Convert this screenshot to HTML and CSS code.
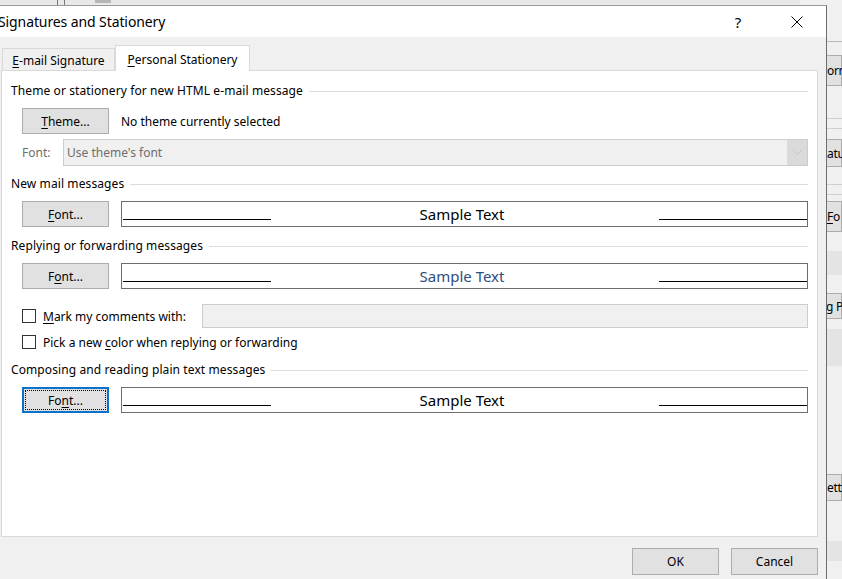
FILE: index.html
```html
<!DOCTYPE html>
<html>
<head>
<meta charset="utf-8">
<title>Signatures and Stationery</title>
<link rel="stylesheet" href="styles.css">
</head>
<body>
<div class="topstrip">
  <span class="tick t1"></span><span class="tick t2"></span><span class="tick-icon"></span>
</div>
<div class="backwin">
  <div class="bw-line l1"></div>
  <div class="bw-btn b1"><span class="bw-txt">orm</span></div>
  <div class="bw-line l2"></div>
  <div class="bw-line l3"></div>
  <div class="bw-btn b2"><span class="bw-txt">atu</span></div>
  <div class="bw-line l4"></div>
  <div class="bw-line l5"></div>
  <div class="bw-btn b3"><span class="bw-txt"><u>F</u>o</span></div>
  <div class="bw-band a1"></div>
  <div class="bw-btn b4"><span class="bw-txt g">g P</span></div>
  <div class="bw-band a2"></div>
  <div class="bw-btn b5"><span class="bw-txt">etti</span></div>
  <div class="bw-band a3"></div>
</div>
<div class="dialog">
  <div class="titlebar">
    <div class="title">Signatures and Stationery</div>
    <div class="tb-help">?</div>
    <div class="tb-close">
      <svg width="12" height="12" viewBox="0 0 12 12"><path d="M0.5 0.5 L11.5 11.5 M11.5 0.5 L0.5 11.5" stroke="#000" stroke-width="1" fill="none"/></svg>
    </div>
  </div>
  <div class="dbody">
    <div class="tabs">
      <div class="tab"><span><u>E</u>-mail Signature</span></div>
      <div class="tab active"><span><u>P</u>ersonal Stationery</span></div>
    </div>
    <div class="panel">
      <div class="group-head h1"><span>Theme or stationery for new HTML e-mail message</span></div>
      <div class="row r-theme">
        <div class="btn"><span><u>T</u>heme...</span></div>
        <span class="theme-text">No theme currently selected</span>
      </div>
      <div class="row r-combo">
        <span class="lbl-dis">Font:</span>
        <div class="combo">
          <span class="combo-text">Use theme's font</span>
          <span class="combo-arrow">
            <svg width="9" height="6" viewBox="0 0 9 6"><path d="M0.5 0.5 L4.5 4.5 L8.5 0.5" stroke="#c4c4c4" stroke-width="1" fill="none"/></svg>
          </span>
        </div>
      </div>
      <div class="group-head h2"><span>New mail messages</span></div>
      <div class="row r-font">
        <div class="btn"><span><u>F</u>ont...</span></div>
        <div class="sample"><span class="seg"></span><span class="sample-text">Sample Text</span><span class="seg"></span></div>
      </div>
      <div class="group-head h3"><span>Replying or forwarding messages</span></div>
      <div class="row r-font">
        <div class="btn"><span>F<u>o</u>nt...</span></div>
        <div class="sample"><span class="seg"></span><span class="sample-text blue">Sample Text</span><span class="seg"></span></div>
      </div>
      <div class="row r-mark">
        <span class="check"></span>
        <span class="mark-label"><u>M</u>ark my comments with:</span>
        <div class="textbox"></div>
      </div>
      <div class="row r-pick">
        <span class="check"></span>
        <span class="pick-label">Pick a new <u>c</u>olor when replying or forwarding</span>
      </div>
      <div class="group-head h4"><span>Composing and reading plain text messages</span></div>
      <div class="row r-font">
        <div class="btn focused"><span class="focus-rect">Fo<u>n</u>t...</span></div>
        <div class="sample"><span class="seg"></span><span class="sample-text">Sample Text</span><span class="seg"></span></div>
      </div>
    </div>
    <div class="footer">
      <div class="btn fbtn"><span>OK</span></div>
      <div class="btn fbtn"><span>Cancel</span></div>
    </div>
  </div>
</div>
</body>
</html>
```

FILE: styles.css
```css
html, body {
  margin: 0;
  padding: 0;
}
body {
  width: 842px;
  height: 579px;
  overflow: hidden;
  position: relative;
  background: #f0f0f0;
  font-family: "Noto Sans", "Open Sans", sans-serif;
  font-size: 12px;
  color: #000;
}
u { text-decoration: underline; text-underline-offset: 2px; text-decoration-thickness: 1px; }

.topstrip {
  height: 5px;
  background: #e8e8e8;
  display: flex;
}
.tick { display: block; width: 1px; height: 5px; background: #7a7a7a; }
.t1 { margin-left: 57px; }
.t2 { margin-left: 6px; }
.tick-icon { display: block; margin-left: 30px; width: 16px; height: 3px; background: #b5b5b5; }

.backwin {
  position: absolute;
  left: 800px;
  top: 0;
  width: 42px;
  height: 579px;
  background: #f0f0f0;
  display: flex;
  flex-direction: column;
  z-index: 1;
}
.bw-line { height: 1px; background: #d0d0d0; flex: none; }
.l1 { margin-top: 41px; background: #b9b9b9; }
.l2 { margin-top: 32px; }
.l3 { margin-top: 9px; }
.l4 { margin-top: 17px; }
.l5 { margin-top: 9px; }
.bw-btn {
  flex: none;
  box-sizing: border-box;
  border: 1px solid #adadad;
  background: #e1e1e1;
  display: flex;
  align-items: center;
  white-space: nowrap;
}
.bw-txt { padding-left: 26px; letter-spacing: -0.3px; }
.bw-txt.g { padding-left: 25px; }
.b1 { margin-top: 13px; height: 31px; }
.b2 { margin-top: 10px; height: 28px; }
.b3 { margin-top: 6px; height: 31px; }
.bw-band { flex: none; background: #e4e4e4; }
.a1 { margin-top: 19px; height: 24px; }
.b4 { margin-top: 18px; height: 26px; }
.a2 { margin-top: 10px; height: 37px; }
.b5 { margin-top: 108px; height: 27px; }
.a3 { margin-top: 40px; height: 20px; }

.dialog {
  position: absolute;
  left: 0;
  top: 5px;
  width: 826px;
  height: 573px;
  border-top: 1px solid #9a9a9a;
  border-right: 1px solid #6d6d6d;
  background: #f0f0f0;
  display: flex;
  flex-direction: column;
  z-index: 2;
}
.titlebar {
  height: 31px;
  flex: none;
  background: #fff;
  display: flex;
  align-items: center;
  padding-right: 6px;
}
.title {
  flex: 1;
  font-size: 14px;
  letter-spacing: -0.1px;
  margin-left: -2px;
  white-space: nowrap;
}
.tb-help {
  width: 36px;
  text-align: center;
  font-size: 15px;
  line-height: 20px;
}
.tb-close {
  width: 46px;
  margin-left: 18px;
  display: flex;
  justify-content: center;
  align-items: center;
  padding-top: 1px;
}
.tb-close svg { display: block; }

.dbody { flex: 1; display: flex; flex-direction: column; }

.tabs {
  display: flex;
  align-items: flex-end;
  margin-top: 8px;
  padding-left: 2px;
  height: 25px;
  position: relative;
  z-index: 1;
}
.tab {
  box-sizing: border-box;
  width: 113px;
  height: 22px;
  border: 1px solid #d9d9d9;
  border-bottom: none;
  display: flex;
  align-items: center;
  justify-content: center;
  padding-top: 1px;
  white-space: nowrap;
}
.tab.active {
  width: 135px;
  height: 26px;
  margin-bottom: -1px;
  background: #fff;
  padding-top: 1px;
  padding-bottom: 0;
}

.panel {
  margin-left: 1px;
  width: 817px;
  height: 467px;
  box-sizing: border-box;
  border: 1px solid #d9d9d9;
  background: #fff;
  padding: 12px 9px 0 9px;
  display: flex;
  flex-direction: column;
}

.group-head {
  display: flex;
  align-items: center;
  height: 16px;
  line-height: 16px;
  white-space: nowrap;
  letter-spacing: 0.1px;
}
.group-head::after {
  content: "";
  flex: 1;
  height: 1px;
  background: #dcdcdc;
  margin-left: 6px;
}
.h2 { margin-top: 10px; }
.h3 { margin-top: 11px; }
.h4 { margin-top: 12px; }

.row { display: flex; align-items: center; }

.btn {
  box-sizing: border-box;
  width: 87px;
  height: 26px;
  border: 1px solid #adadad;
  background: #e1e1e1;
  display: flex;
  align-items: center;
  justify-content: center;
  flex: none;
  white-space: nowrap;
}
.panel .btn { margin-left: 11px; }
.btn.focused {
  border: 2px solid #0a72c8;
  padding: 1px;
}
.focus-rect {
  flex: 1;
  align-self: stretch;
  display: flex;
  align-items: center;
  justify-content: center;
  border: 1px dotted #000;
}

.r-theme { margin-top: 9px; }
.theme-text { margin-left: 12px; }

.r-combo { margin-top: 5px; }
.lbl-dis { color: #6d6d6d; margin-left: 11px; width: 41px; flex: none; }
.combo {
  flex: 1;
  height: 27px;
  box-sizing: border-box;
  border: 1px solid #cccccc;
  background: #f0f0f0;
  display: flex;
  align-items: center;
}
.combo-text { flex: 1; color: #6d6d6d; padding-left: 3px; }
.combo-arrow {
  width: 20px;
  align-self: stretch;
  background: #dadada;
  display: flex;
  align-items: center;
  justify-content: center;
}
.combo-arrow svg { display: block; }

.r-font { margin-top: 9px; }
.sample {
  flex: 1;
  margin-left: 12px;
  height: 26px;
  box-sizing: border-box;
  border: 1px solid #6e6e6e;
  display: flex;
  padding-left: 1px;
}
.seg {
  width: 148px;
  height: 18px;
  box-sizing: border-box;
  border-bottom: 1px solid #000;
  flex: none;
}
.sample-text {
  flex: 1;
  text-align: center;
  font-family: "Noto Sans", sans-serif;
  font-size: 15px;
  line-height: 24px;
  color: #000;
  padding-right: 6px;
}
.sample-text.blue { color: #2e4e7c; }

.check {
  width: 14px;
  height: 14px;
  box-sizing: border-box;
  border: 1px solid #333;
  background: #fff;
  margin-left: 11px;
  flex: none;
}
.r-mark { margin-top: 15px; height: 24px; }
.mark-label { margin-left: 7px; width: 159px; flex: none; white-space: nowrap; }
.textbox {
  flex: 1;
  height: 24px;
  box-sizing: border-box;
  border: 1px solid #cccccc;
  background: #f0f0f0;
}
.r-pick { margin-top: 6px; height: 16px; }
.pick-label { margin-left: 7px; white-space: nowrap; }

.footer {
  display: flex;
  justify-content: flex-end;
  gap: 12px;
  margin-top: 11px;
  padding-right: 8px;
}
.fbtn { height: 27px; }
```
